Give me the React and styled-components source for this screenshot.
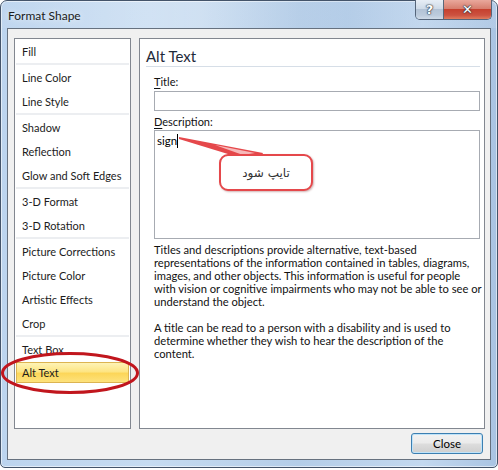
import React from 'react';
import styled, { createGlobalStyle } from 'styled-components';

const GlobalStyle = createGlobalStyle`
  html, body {
    margin: 0;
    padding: 0;
    background: #fff;
  }
  body {
    font-family: 'Lato', 'Liberation Sans', sans-serif;
    font-size: 11px;
    letter-spacing: 0;
    color: #000;
  }
`;

const Window = styled.div`
  position: relative;
  box-sizing: border-box;
  width: 498px;
  height: 468px;
  border: 1px solid #44546a;
  border-radius: 7px 7px 5px 5px;
  padding: 0 6px 7px 6px;
  display: flex;
  flex-direction: column;
  background: linear-gradient(90deg, #bcd4ee 0%, #c6dbf1 30%, #b4cde8 60%, #c3d8ef 85%, #a9c4e3 100%);
  box-shadow: inset 0 0 0 1px rgba(255, 255, 255, 0.55);
`;

const TitleBar = styled.div`
  height: 27px;
  display: flex;
  align-items: flex-start;
  background: linear-gradient(90deg, rgba(255,255,255,0.05), rgba(255,255,255,0.25) 40%, rgba(150,180,215,0.15) 70%, rgba(255,255,255,0.1));
  margin: 0 -6px;
  padding: 0 5px 0 7px;
`;

const Caption = styled.div`
  padding-top: 7px;
  font-size: 12px;
  line-height: 16px;
  color: #1b1b1b;
  text-shadow: 0 0 6px rgba(255, 255, 255, 0.9);
`;

const CaptionButtons = styled.div`
  margin-left: auto;
  margin-top: -1px;
  display: flex;
  border: 1px solid #55657a;
  border-top: none;
  border-radius: 0 0 5px 5px;
  overflow: hidden;
  height: 19px;
`;

const CaptionButton = styled.div`
  width: ${p => p.$w}px;
  height: 19px;
  display: flex;
  align-items: center;
  justify-content: center;
  font-family: 'DejaVu Sans', sans-serif;
  font-weight: bold;
  font-size: ${p => p.$fs}px;
  color: #fff;
  text-shadow: 0 0 1px #2a3442, 0 0 1px #2a3442, 0 0 2px #2a3442;
  background: ${p =>
    p.$close
      ? 'linear-gradient(#e9a89c 0%, #d77f6f 45%, #c6412f 50%, #cc5240 80%, #e07c5e 100%)'
      : 'linear-gradient(#e7eef6 0%, #cfdbe8 45%, #b3c3d6 50%, #bccbdc 80%, #cfdbe8 100%)'};
  & + & {
    border-left: 1px solid #5a687a;
  }
`;

const Client = styled.div`
  flex: 1;
  min-width: 0;
  display: flex;
  flex-direction: column;
  background: #f0f0f0;
  border: 1px solid #66717f;
  padding: 9px 5px 5px 6px;
`;

const Panels = styled.div`
  height: 391px;
  display: flex;
  gap: 8px;
`;

const Nav = styled.div`
  box-sizing: border-box;
  flex: none;
  width: 117px;
  border: 1px solid #828790;
  background: #fff;
  padding: 0 1px;
`;

const NavGroup = styled.div`
  border-bottom: 2px solid #eceef1;
  &:last-child {
    border-bottom: none;
  }
`;

const NavItem = styled.div`
  box-sizing: border-box;
  height: ${p => (p.$selected ? 21 : 24)}px;
  margin: ${p => (p.$selected ? '1px 0 2px' : '0')};
  padding-left: ${p => (p.$selected ? 5 : 6)}px;
  display: flex;
  align-items: center;
  color: #1c1c1c;
  white-space: nowrap;
  ${p =>
    p.$selected &&
    `
    border: 1px solid #dcb451;
    background: linear-gradient(#fef3b6 0%, #fde584 45%, #fcd659 55%, #fde27c 100%);
  `}
`;

const Content = styled.div`
  flex: 1;
  min-width: 0;
  overflow: hidden;
  border: 1px solid #828790;
  background: #fff;
  padding: 0 4px 0 6px;
`;

const Heading = styled.div`
  padding-top: 7px;
  font-size: 15px;
  line-height: 20px;
  color: #1e2a3a;
  border-bottom: 1px solid #d6dee7;
`;

const Form = styled.div`
  padding: 8px 0 0 8px;
`;

const Label = styled.div`
  line-height: 14px;
  margin-top: ${p => p.$mt || 0}px;
  color: #111;
  u {
    text-decoration: underline;
    text-underline-offset: 2px;
  }
`;

const TextField = styled.div`
  position: relative;
  box-sizing: border-box;
  height: ${p => p.$h}px;
  margin-top: ${p => p.$mt}px;
  border: 1px solid #a7abb2;
  background: #fff;
  padding: 2px 2px;
  font-size: 11.5px;
  line-height: 16px;
`;

const Caret = styled.span`
  display: inline-block;
  width: 1px;
  height: 14px;
  background: #000;
  vertical-align: -3px;
`;

const Tail = styled.svg`
  position: absolute;
  left: 0;
  top: 0;
  overflow: visible;
`;

const Bubble = styled.div`
  position: absolute;
  left: 64px;
  top: 23px;
  width: 94px;
  height: 37px;
  box-sizing: border-box;
  border: 2px solid #e5484b;
  border-radius: 9px;
  background: #fff;
  box-shadow: 1px 1px 2px rgba(120, 40, 40, 0.35);
  display: flex;
  align-items: center;
  justify-content: center;
  font-family: 'DejaVu Sans', sans-serif;
  font-size: 12px;
  color: #333;
  direction: rtl;
`;

const Help = styled.p`
  margin: 4px 0 0;
  font-size: 11.2px;
  line-height: 13px;
  color: #111;
  white-space: nowrap;
  & + & {
    margin-top: 13px;
  }
`;

const ButtonRow = styled.div`
  display: flex;
  justify-content: flex-end;
  margin-top: 4px;
  padding-right: 2px;
`;

const Button = styled.button`
  width: 72px;
  height: 21px;
  font-family: 'Lato', 'Liberation Sans', sans-serif;
  font-size: 11.5px;
  color: #000;
  border: 1px solid #3c7fb1;
  border-radius: 3px;
  background: linear-gradient(#f2f2f2 0%, #ebebeb 48%, #dddddd 52%, #cfcfcf 100%);
  box-shadow: inset 0 0 0 1px #bfe3f9;
  padding: 0;
`;

const Ring = styled.svg`
  position: absolute;
  left: -1px;
  top: 350px;
  overflow: visible;
`;

const groups = [
  ['Fill'],
  ['Line Color', 'Line Style'],
  ['Shadow', 'Reflection', 'Glow and Soft Edges'],
  ['3-D Format', '3-D Rotation'],
  ['Picture Corrections', 'Picture Color', 'Artistic Effects', 'Crop'],
  ['Text Box', 'Alt Text'],
];

export default function App() {
  return (
    <>
      <GlobalStyle />
      <Window>
        <TitleBar>
          <Caption>Format Shape</Caption>
          <CaptionButtons>
            <CaptionButton $w={27} $fs={13}>?</CaptionButton>
            <CaptionButton $w={47} $fs={13} $close>✕</CaptionButton>
          </CaptionButtons>
        </TitleBar>
        <Client>
          <Panels>
            <Nav>
              {groups.map((g, i) => (
                <NavGroup key={i}>
                  {g.map(item => (
                    <NavItem key={item} $selected={item === 'Alt Text'}>
                      {item}
                    </NavItem>
                  ))}
                </NavGroup>
              ))}
            </Nav>
            <Content>
              <Heading>Alt Text</Heading>
              <Form>
                <Label>
                  <u>T</u>itle:
                </Label>
                <TextField $h={20} $mt={2} />
                <Label $mt={4}>
                  <u>D</u>escription:
                </Label>
                <TextField $h={109} $mt={1}>
                  sign
                  <Caret />
                  <Tail width="120" height="40">
                    <polygon points="24,6 108,22 106,26 86,27 24,8" fill="#e5484b" />
                    <polygon points="60,14 100,22 88,24" fill="#f7b9ba" />
                  </Tail>
                  <Bubble>تایپ شود</Bubble>
                </TextField>
                <Help>
                  Titles and descriptions provide alternative, text-based<br />
                  representations of the information contained in tables, diagrams,<br />
                  images, and other objects. This information is useful for people<br />
                  with vision or cognitive impairments who may not be able to see or<br />
                  understand the object.
                </Help>
                <Help>
                  A title can be read to a person with a disability and is used to<br />
                  determine whether they wish to hear the description of the<br />
                  content.
                </Help>
              </Form>
            </Content>
          </Panels>
          <ButtonRow>
            <Button>Close</Button>
          </ButtonRow>
        </Client>
        <Ring width="140" height="44">
          <ellipse cx="70" cy="22" rx="67.5" ry="19.5" fill="none" stroke="#c1161d" strokeWidth="3" />
        </Ring>
      </Window>
    </>
  );
}
